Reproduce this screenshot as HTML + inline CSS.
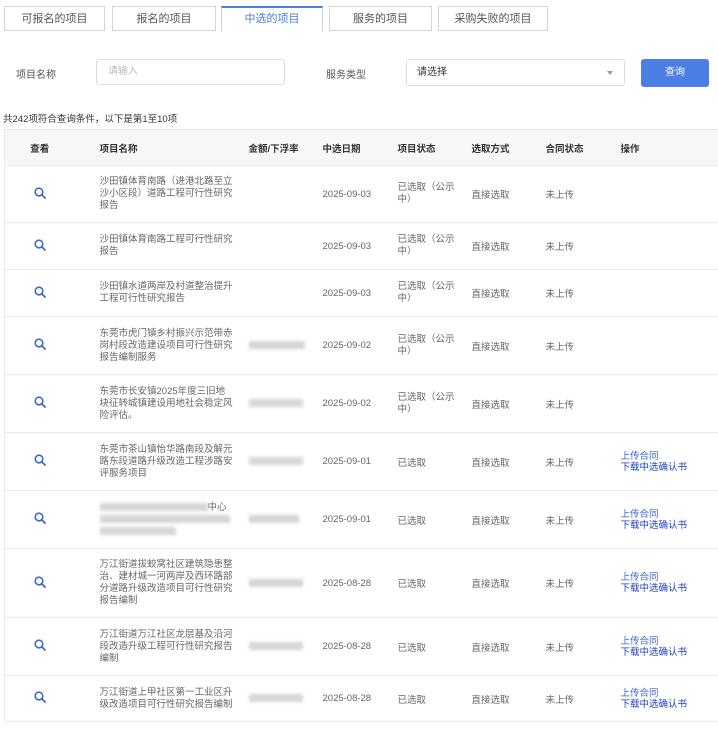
<!DOCTYPE html>
<html><head><meta charset="utf-8"><style>
body{margin:0;width:718px;height:729px;overflow:hidden;background:#fff;font-family:"Liberation Sans","Noto Sans CJK SC",sans-serif;color:#666;font-size:10px}
.tab{position:absolute;top:6px;height:25px;border:1px solid #d4d4d4;box-sizing:border-box;font-size:11px;color:#555;text-align:center;line-height:24px;background:#fff}
.tab.a{border-bottom-color:#fff;border-top:2px solid #4a7de0;color:#4a7de0;line-height:22px;height:26px}
.ab{position:absolute}
table{position:absolute;left:4px;top:129px;border-collapse:collapse;width:720px;table-layout:fixed}
td,th{padding:0;border-bottom:1px solid #e8eaf0;vertical-align:middle;text-align:left;font-size:9.5px}
th{background:#f6f7f9;height:35px;font-weight:bold;color:#333;border-top:1px solid #e8eaf0}
tr td:first-child,tr th:first-child{border-left:1px solid #e8eaf0;text-align:center}
tr td:nth-child(2),tr th:nth-child(2){padding-left:25px}
.n{line-height:12px;width:134px;color:#666}
.s{width:62px;line-height:12px}
.bl{display:inline-block;height:8px;background:#d6d6d6;filter:blur(1.5px);vertical-align:middle}
.lk{color:#1b40c7;line-height:11px}
.lk div:first-child{color:#3a63d8}
</style></head><body>
<div class="tab" style="left:4px;width:101px">可报名的项目</div>
<div class="tab" style="left:112px;width:104px">报名的项目</div>
<div class="tab a" style="left:221px;width:102px">中选的项目</div>
<div class="tab" style="left:329px;width:103px">服务的项目</div>
<div class="tab" style="left:438px;width:110px">采购失败的项目</div>

<div class="ab" style="left:16px;top:66px;color:#555">项目名称</div>
<div class="ab" style="left:96px;top:59px;width:189px;height:26px;border:1px solid #ddd;border-radius:3px;box-sizing:border-box;color:#bbb;padding-left:11px;line-height:24px">请输入</div>
<div class="ab" style="left:326px;top:66px;color:#555">服务类型</div>
<div class="ab" style="left:406px;top:59px;width:219px;height:27px;border:1px solid #ddd;border-radius:3px;box-sizing:border-box;color:#333;padding-left:10px;line-height:26px">请选择<span style="position:absolute;right:11px;top:11px;border:3px solid transparent;border-top:4px solid #999"></span></div>
<div class="ab" style="left:641px;top:59px;width:68px;height:28px;background:#4b7fe3;border-radius:3px;color:#fff;text-align:center;line-height:28px">查询</div>
<div class="ab" style="left:3px;top:111px;color:#333;font-size:9.5px">共242项符合查询条件，以下是第1至10项</div>

<table>
<colgroup><col style="width:70px"><col style="width:174px"><col style="width:74px"><col style="width:75px"><col style="width:74px"><col style="width:74px"><col style="width:75px"><col style="width:104px"></colgroup>
<tr><th>查看</th><th>项目名称</th><th>金额/下浮率</th><th>中选日期</th><th>项目状态</th><th>选取方式</th><th>合同状态</th><th>操作</th></tr>
<tr style="height:57px"><td>Q</td><td><div class="n">沙田镇体育南路（进港北路至立沙小区段）道路工程可行性研究报告</div></td><td></td><td>2025-09-03</td><td><div class="s">已选取（公示中）</div></td><td>直接选取</td><td>未上传</td><td></td></tr>
<tr style="height:47px"><td>Q</td><td><div class="n">沙田镇体育南路工程可行性研究报告</div></td><td></td><td>2025-09-03</td><td><div class="s">已选取（公示中）</div></td><td>直接选取</td><td>未上传</td><td></td></tr>
<tr style="height:47px"><td>Q</td><td><div class="n">沙田镇水道两岸及村道整治提升工程可行性研究报告</div></td><td></td><td>2025-09-03</td><td><div class="s">已选取（公示中）</div></td><td>直接选取</td><td>未上传</td><td></td></tr>
<tr style="height:58px"><td>Q</td><td><div class="n">东莞市虎门镇乡村振兴示范带赤岗村段改造建设项目可行性研究报告编制服务</div></td><td><span class="bl" style="width:56px"></span></td><td>2025-09-02</td><td><div class="s">已选取（公示中）</div></td><td>直接选取</td><td>未上传</td><td></td></tr>
<tr style="height:58px"><td>Q</td><td><div class="n">东莞市长安镇2025年度三旧地块征转城镇建设用地社会稳定风险评估。</div></td><td><span class="bl" style="width:54px"></span></td><td>2025-09-02</td><td><div class="s">已选取（公示中）</div></td><td>直接选取</td><td>未上传</td><td></td></tr>
<tr style="height:58px"><td>Q</td><td><div class="n">东莞市茶山镇怡华路南段及解元路东段道路升级改造工程涉路安评服务项目</div></td><td><span class="bl" style="width:54px"></span></td><td>2025-09-01</td><td>已选取</td><td>直接选取</td><td>未上传</td><td><div class="lk"><div>上传合同</div><div>下载中选确认书</div></div></td></tr>
<tr style="height:58px"><td>Q</td><td><div class="n"><span class="bl" style="width:108px"></span>中心<br><span class="bl" style="width:130px"></span><br><span class="bl" style="width:76px"></span></div></td><td><span class="bl" style="width:50px"></span></td><td>2025-09-01</td><td>已选取</td><td>直接选取</td><td>未上传</td><td><div class="lk"><div>上传合同</div><div>下载中选确认书</div></div></td></tr>
<tr style="height:69px"><td>Q</td><td><div class="n">万江街道拔蛟窝社区建筑隐患整治、建材城一河两岸及西环路部分道路升级改造项目可行性研究报告编制</div></td><td><span class="bl" style="width:54px"></span></td><td>2025-08-28</td><td>已选取</td><td>直接选取</td><td>未上传</td><td><div class="lk"><div>上传合同</div><div>下载中选确认书</div></div></td></tr>
<tr style="height:58px"><td>Q</td><td><div class="n">万江街道万江社区龙层基及沿河段改造升级工程可行性研究报告编制</div></td><td><span class="bl" style="width:54px"></span></td><td>2025-08-28</td><td>已选取</td><td>直接选取</td><td>未上传</td><td><div class="lk"><div>上传合同</div><div>下载中选确认书</div></div></td></tr>
<tr style="height:46px"><td>Q</td><td><div class="n">万江街道上甲社区第一工业区升级改造项目可行性研究报告编制</div></td><td><span class="bl" style="width:54px"></span></td><td>2025-08-28</td><td>已选取</td><td>直接选取</td><td>未上传</td><td><div class="lk"><div>上传合同</div><div>下载中选确认书</div></div></td></tr>
</table>
<script>
document.querySelectorAll('tr td:first-child').forEach(function(t){t.innerHTML='<svg width="12" height="12" viewBox="0 0 12 12"><circle cx="5" cy="5" r="3.8" fill="none" stroke="#3a6bc8" stroke-width="1.6"/><path d="M8 8L11 11" stroke="#3a6bc8" stroke-width="1.8" stroke-linecap="round"/></svg>';});
</script>
</body></html>
